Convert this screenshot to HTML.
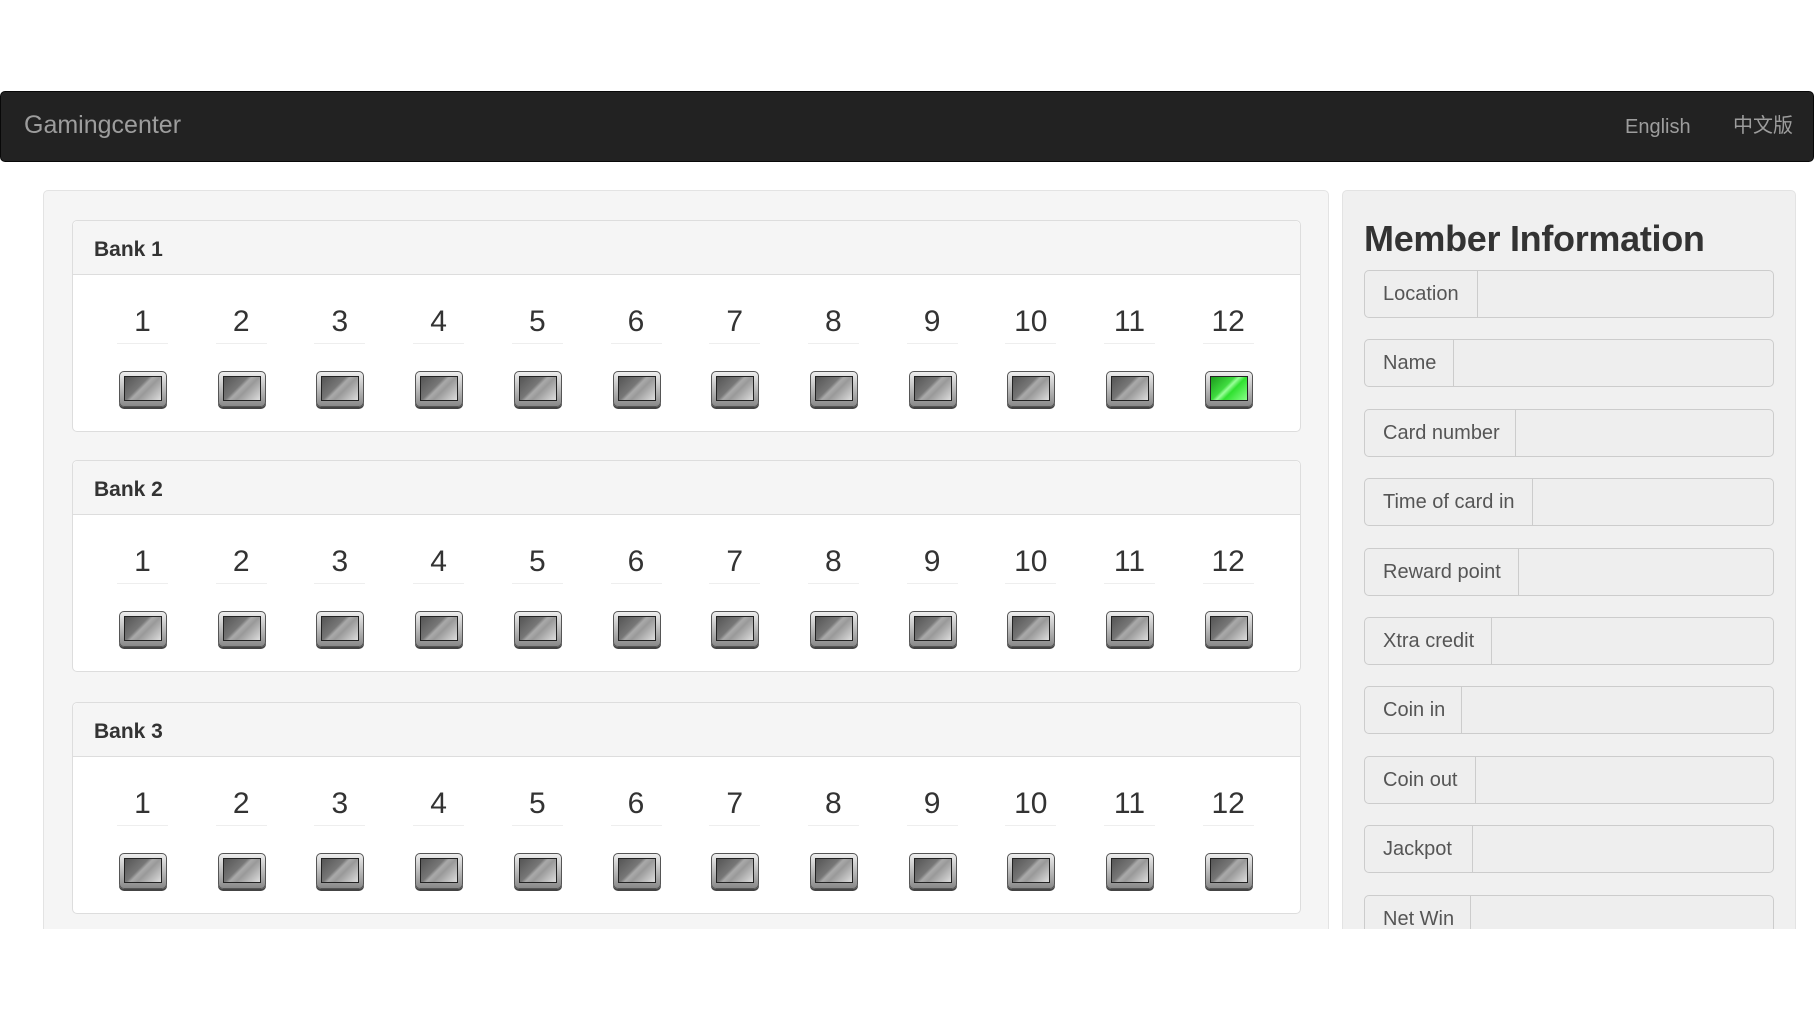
<!DOCTYPE html>
<html><head><meta charset="utf-8"><style>
*{box-sizing:border-box;margin:0;padding:0}
body{width:1814px;height:1020px;background:#fff;font-family:"Liberation Sans","Noto Sans CJK SC",sans-serif;position:relative;overflow:hidden;color:#333}
.nav{position:absolute;left:0;top:91px;width:1814px;height:71px;background:#222;border:1px solid #080808;border-radius:5px}
.brand{position:absolute;left:23px;top:19px;font-size:25px;color:#9d9d9d}
.lang{position:absolute;top:23px;font-size:20px;color:#9d9d9d;line-height:24px}
.clip{position:absolute;left:0;top:0;width:1814px;height:929px;overflow:hidden}
.well{position:absolute;background:#f5f5f5;border:1px solid #e3e3e3;border-radius:5px}
.panel{position:absolute;left:72px;width:1229px;height:212px;background:#fff;border:1px solid #ddd;border-radius:5px}
.ph{height:54px;background:#f5f5f5;border-bottom:1px solid #ddd;border-radius:5px 5px 0 0;padding:17px 21px 0;font-size:21px;font-weight:bold;color:#333}
.col{position:absolute;width:98.7px;text-align:center}
.num{position:absolute;left:24px;width:51px;top:29px;font-size:30px;line-height:36px;color:#333;border-bottom:1px solid #eee;height:40px;text-align:center}
.mon{position:absolute;left:26px;top:96px;width:48px;height:36px;border-radius:5px;background:linear-gradient(#eee,#888);border:1px solid #555;box-shadow:0 2px 0 #444}
.mon i{position:absolute;left:4px;top:4px;right:4px;bottom:5px;border:1px solid #222;background:linear-gradient(135deg,#555 0%,#777 40%,#aaa 48%,#999 60%,#ddd 100%)}
.mon.g i{background:linear-gradient(135deg,#1c9c1c 0%,#3fdc3f 40%,#9f9 48%,#2fe02f 60%,#8f8 100%)}
h2{position:absolute;left:1364px;top:218px;font-size:36px;font-weight:bold;color:#333;letter-spacing:-0.3px}
.ig{position:absolute;left:1364px;width:410px;height:48px;border:1px solid #ccc;border-radius:5px;background:#eee;display:flex}
.ig span{border-right:1px solid #ccc;font-size:20px;color:#555;padding-left:18px;line-height:46px;height:46px;flex:none}
</style></head><body>
<div class="nav"><div class="brand">Gamingcenter</div><div class="lang" style="left:1624px">English</div><div class="lang" style="left:1732px;top:22px">中文版</div></div>
<div class="clip">
<div class="well" style="left:43px;top:190px;width:1286px;height:800px"></div>
<div class="well" style="left:1342px;top:190px;width:454px;height:800px;background:#f0f0f0"></div>
<div id="banks"></div>
<h2>Member Information</h2>
<div id="ig"></div>
</div>
<script>
var b='';[[220,'Bank 1'],[460,'Bank 2'],[702,'Bank 3']].forEach(function(p,k){
b+='<div class="panel" style="top:'+p[0]+'px"><div class="ph">'+p[1]+'</div>';
for(var i=0;i<12;i++){b+='<div class="col" style="left:'+(20+i*98.7)+'px;top:54px"><div class="num">'+(i+1)+'</div><div class="mon'+(k==0&&i==11?' g':'')+'"><i></i></div></div>';}
b+='</div>';});
document.getElementById('banks').innerHTML=b;
var f=[['Location',113],['Name',89],['Card number',151],['Time of card in',168],['Reward point',154],['Xtra credit',127],['Coin in',97],['Coin out',111],['Jackpot',108],['Net Win',106]],h='';
f.forEach(function(x,i){h+='<div class="ig" style="top:'+Math.round(270+i*69.4)+'px"><span style="width:'+x[1]+'px">'+x[0]+'</span></div>';});
document.getElementById('ig').innerHTML=h;
</script>
</body></html>
